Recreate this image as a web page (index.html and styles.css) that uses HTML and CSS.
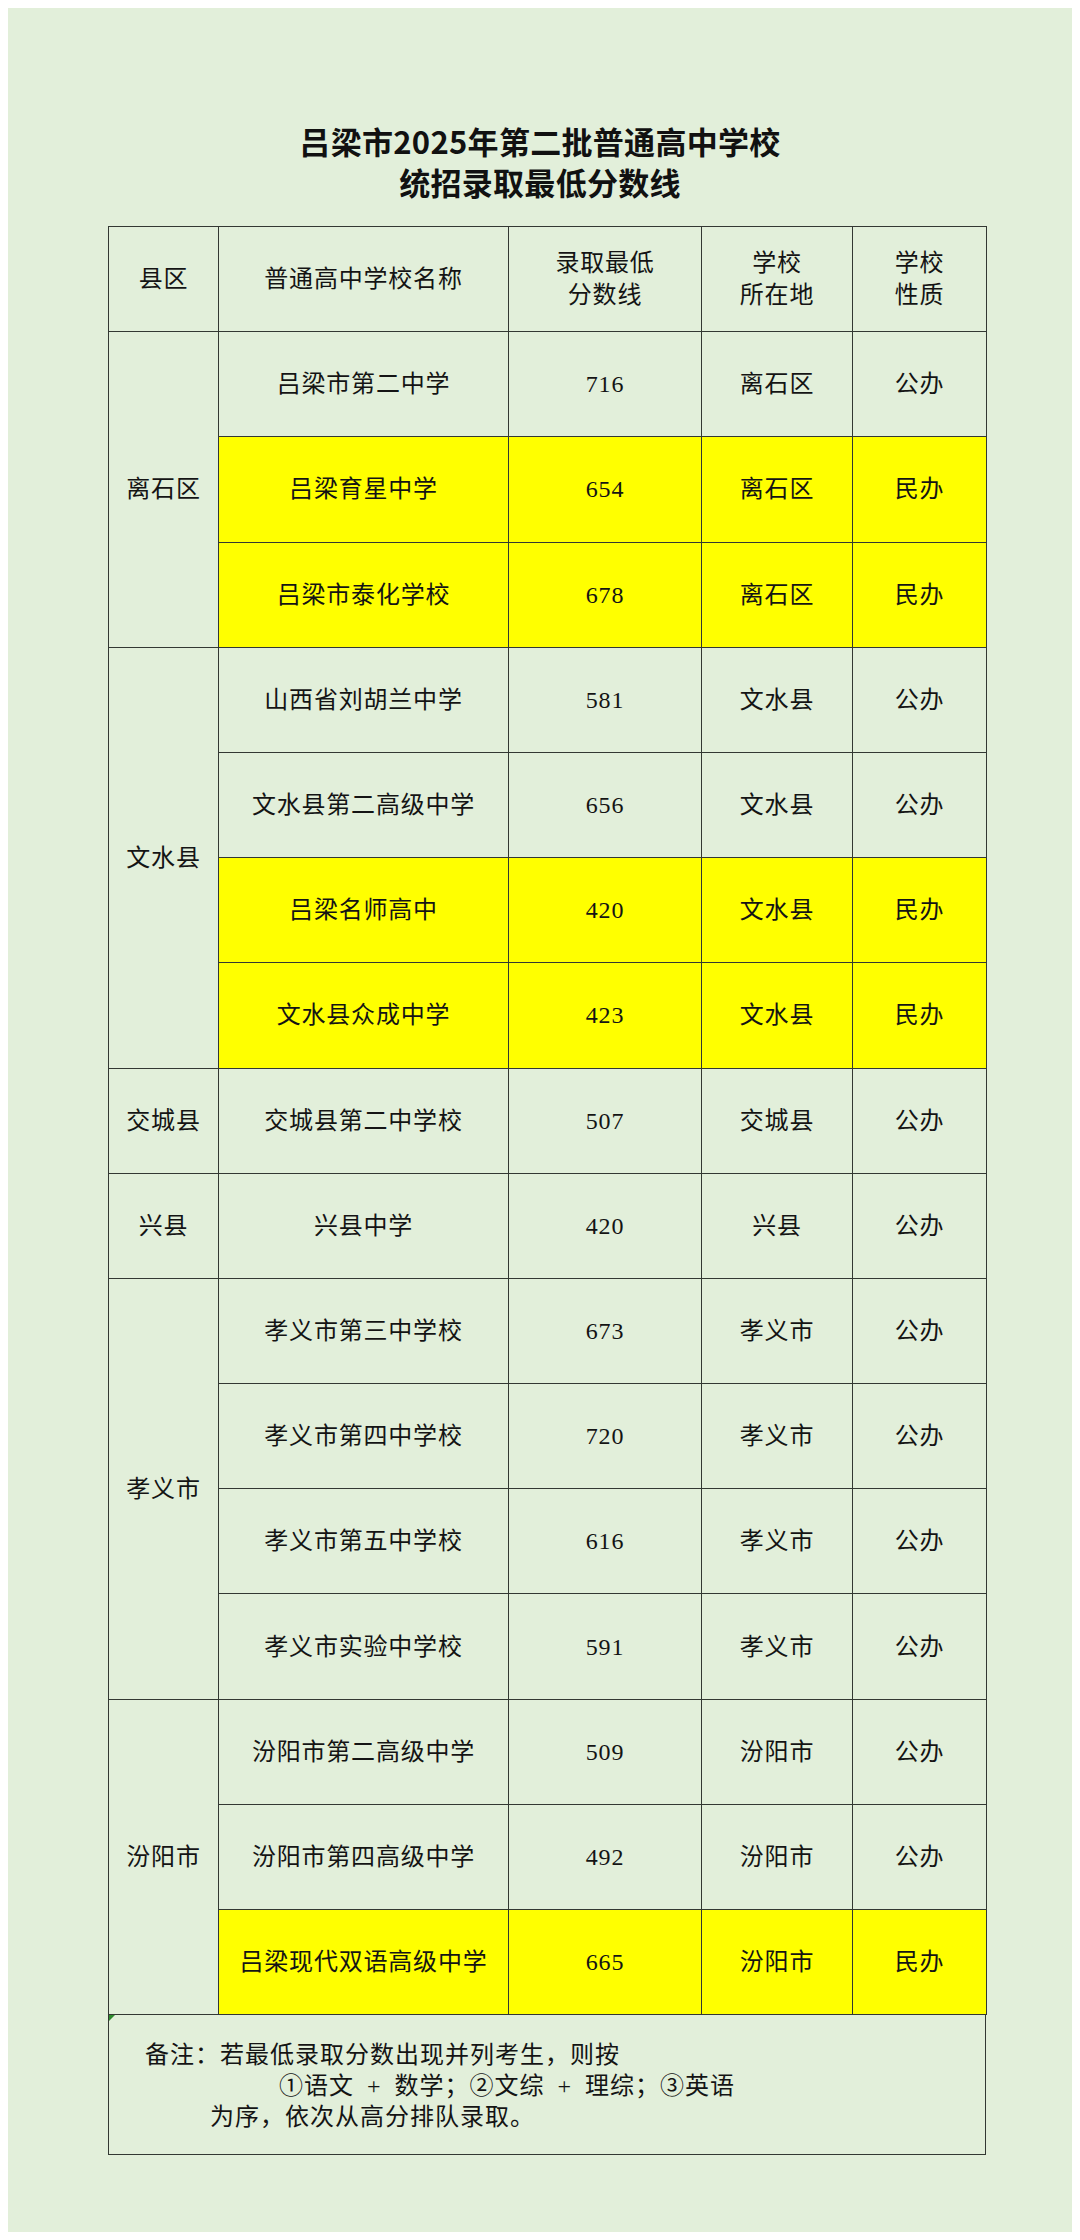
FILE: index.html
```html
<!DOCTYPE html>
<html lang="zh-CN">
<head>
<meta charset="utf-8">
<title>吕梁市2025年第二批普通高中学校统招录取最低分数线</title>
<link rel="stylesheet" href="styles.css">
</head>
<body>
<div class="page">
  <h1 class="title">吕梁市2025年第二批普通高中学校<br>统招录取最低分数线</h1>
  <table class="scores">
    <colgroup>
      <col class="c1"><col class="c2"><col class="c3"><col class="c4"><col class="c5">
    </colgroup>
    <thead>
      <tr>
        <th>县区</th>
        <th>普通高中学校名称</th>
        <th>录取最低<br>分数线</th>
        <th>学校<br>所在地</th>
        <th>学校<br>性质</th>
      </tr>
    </thead>
    <tbody>
      <tr><td rowspan="3">离石区</td><td>吕梁市第二中学</td><td>716</td><td>离石区</td><td>公办</td></tr>
      <tr class="private"><td>吕梁育星中学</td><td>654</td><td>离石区</td><td>民办</td></tr>
      <tr class="private"><td>吕梁市泰化学校</td><td>678</td><td>离石区</td><td>民办</td></tr>

      <tr><td rowspan="4">文水县</td><td>山西省刘胡兰中学</td><td>581</td><td>文水县</td><td>公办</td></tr>
      <tr><td>文水县第二高级中学</td><td>656</td><td>文水县</td><td>公办</td></tr>
      <tr class="private"><td>吕梁名师高中</td><td>420</td><td>文水县</td><td>民办</td></tr>
      <tr class="private"><td>文水县众成中学</td><td>423</td><td>文水县</td><td>民办</td></tr>

      <tr><td>交城县</td><td>交城县第二中学校</td><td>507</td><td>交城县</td><td>公办</td></tr>

      <tr><td>兴县</td><td>兴县中学</td><td>420</td><td>兴县</td><td>公办</td></tr>

      <tr><td rowspan="4">孝义市</td><td>孝义市第三中学校</td><td>673</td><td>孝义市</td><td>公办</td></tr>
      <tr><td>孝义市第四中学校</td><td>720</td><td>孝义市</td><td>公办</td></tr>
      <tr><td>孝义市第五中学校</td><td>616</td><td>孝义市</td><td>公办</td></tr>
      <tr><td>孝义市实验中学校</td><td>591</td><td>孝义市</td><td>公办</td></tr>

      <tr><td rowspan="3">汾阳市</td><td>汾阳市第二高级中学</td><td>509</td><td>汾阳市</td><td>公办</td></tr>
      <tr><td>汾阳市第四高级中学</td><td>492</td><td>汾阳市</td><td>公办</td></tr>
      <tr class="private"><td>吕梁现代双语高级中学</td><td>665</td><td>汾阳市</td><td>民办</td></tr>
    </tbody>
  </table>
  <div class="note">
    <p class="note-line">备注：若最低录取分数出现并列考生，则按</p>
    <p class="note-line l2">①语文<span class="plus">+</span>数学；②文综<span class="plus">+</span>理综；③英语</p>
    <p class="note-line l3">为序，依次从高分排队录取。</p>
  </div>
</div>
</body>
</html>
```
FILE: styles.css
```css
html, body {
  margin: 0;
  padding: 0;
  background: #ffffff;
}
body {
  padding: 8px;
}
.page {
  width: 1064px;
  height: 2224px;
  background: #e2efda;
  box-sizing: border-box;
  padding-top: 112px;
  font-family: "Liberation Serif", "Noto Sans CJK SC", serif;
  color: #141414;
}
.title {
  margin: 0;
  text-align: center;
  font-family: "Noto Sans CJK SC", sans-serif;
  font-weight: 700;
  font-size: 31px;
  line-height: 41px;
  letter-spacing: 0.3px;
  color: #111;
}
.scores {
  margin: 24px 0 0 100px;
  width: 878px;
  border-collapse: collapse;
  table-layout: fixed;
}
.c1 { width: 110px; }
.c2 { width: 290px; }
.c3 { width: 193px; }
.c4 { width: 151px; }
.c5 { width: 134px; }
.scores th,
.scores td {
  border: 1.5px solid #333833;
  padding: 0;
  height: 104.2px;
  text-align: center;
  vertical-align: middle;
  font-size: 24px;
  line-height: 32px;
  font-weight: 400;
  letter-spacing: 0.8px;
}
.private td {
  background: #ffff00;
}
.note {
  position: relative;
  margin-left: 100px;
  width: 878px;
  height: 140px;
  box-sizing: border-box;
  border: 1.5px solid #333833;
  border-top: none;
  padding: 25px 0 0 36px;
  font-size: 24px;
  line-height: 31px;
  letter-spacing: 1px;
}
.note::before {
  content: "";
  position: absolute;
  left: 0;
  top: 0;
  width: 0;
  height: 0;
  border-top: 6px solid #2e8b2e;
  border-right: 6px solid transparent;
}
.note-line {
  margin: 0;
  white-space: nowrap;
}
.l2 { padding-left: 134px; }
.l3 { padding-left: 65px; }
.plus {
  display: inline-block;
  margin: 0 13px;
}
```
